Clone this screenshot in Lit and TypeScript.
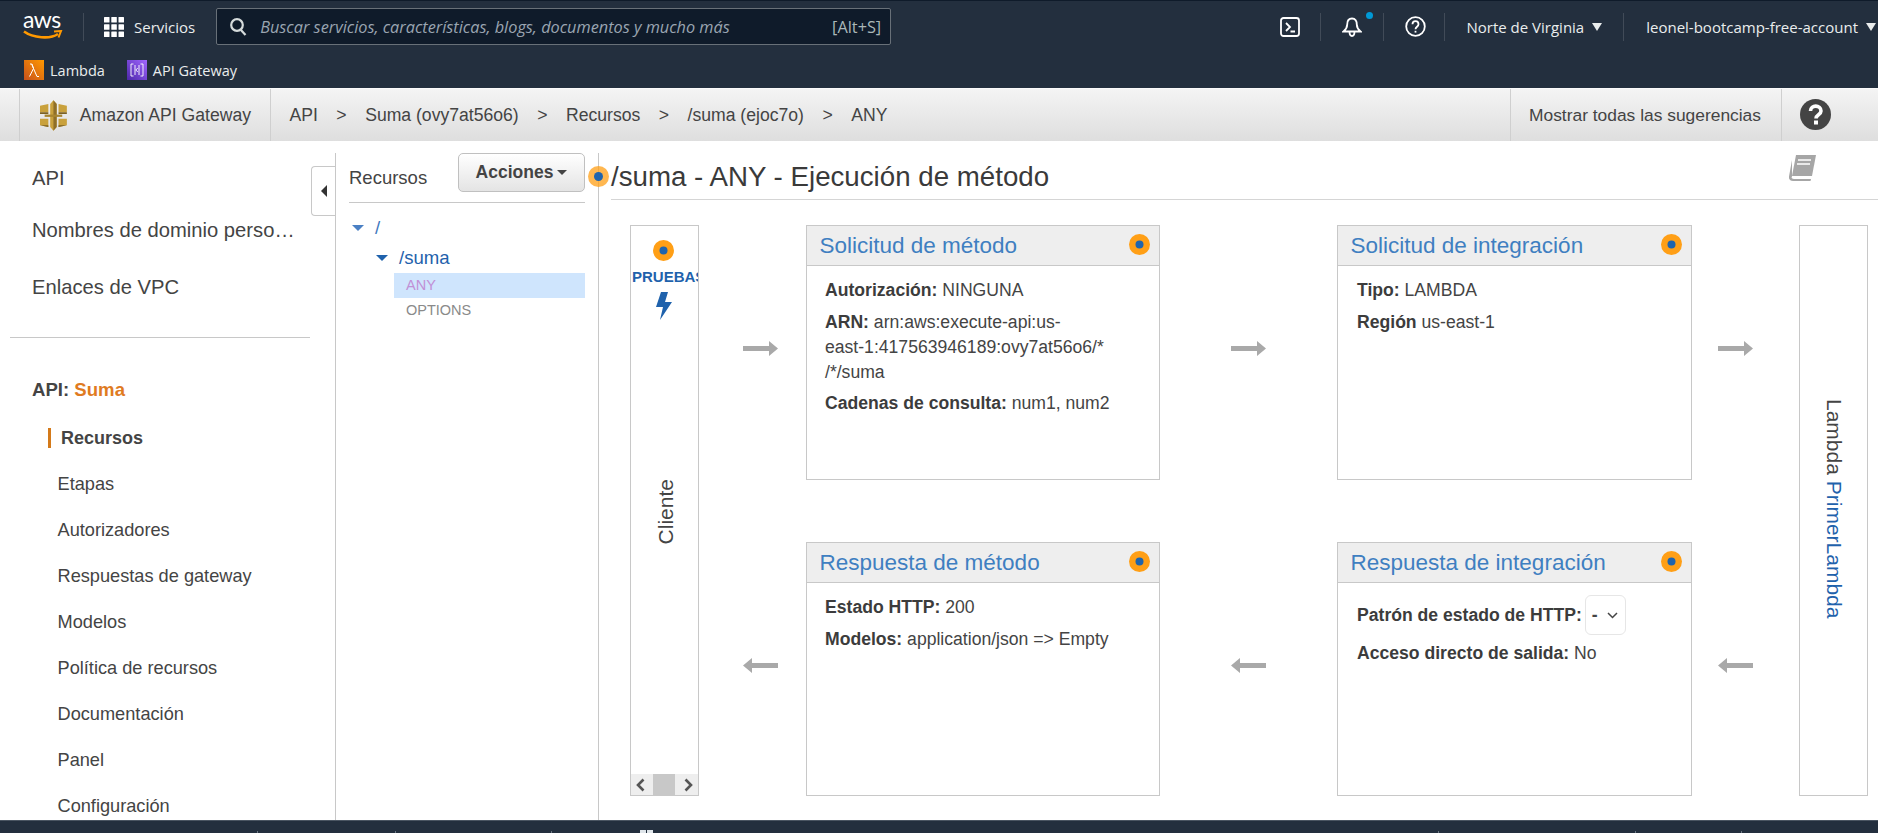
import { LitElement, html, css, svg } from 'lit';
import { customElement } from 'lit/decorators.js';

const SUB_NAV = ['Etapas', 'Autorizadores', 'Respuestas de gateway', 'Modelos', 'Política de recursos', 'Documentación', 'Panel', 'Configuración'];
const FOOT_TICKS = [257, 395, 551, 1438, 1635, 1741];

const dot = svg`<svg class="dot" width="21" height="21" viewBox="0 0 21 21"><circle cx="10.5" cy="10.5" r="10.5" fill="#ff9f16"/><circle cx="10.5" cy="10.5" r="4" fill="#1f64ad"/></svg>`;

const arrowRight = svg`<svg width="35" height="15" viewBox="0 0 35 15"><path d="M0 5h26V0l9 7.5-9 7.500V10H0z" fill="#a9a9a9"/></svg>`;
const arrowLeft = svg`<svg width="35" height="15" viewBox="0 0 35 15"><path d="M35 5H9V0L0 7.500l9 7.500V10h26z" fill="#a9a9a9"/></svg>`;

@customElement('app-root')
export class AppRoot extends LitElement {
  static styles = css`
    :host {
      display: flex;
      flex-direction: column;
      width: 1878px;
      height: 833px;
      overflow: hidden;
      background: #fff;
      font-family: 'Liberation Sans', Arial, sans-serif;
      color: #444;
    }

    /* top console nav */
    .nav {
      flex: 0 0 88px;
      background: #232f3e;
      border-top: 1px solid #0f1b2a;
      box-sizing: border-box;
      color: #eaeded;
      font-family: 'Open Sans', sans-serif;
    }
    .nav-main {
      display: flex;
      align-items: center;
      height: 51px;
    }
    .aws {
      position: relative;
      width: 40px;
      height: 30px;
      margin-left: 23px;
      margin-top: -2px;
    }
    .aws span {
      display: block;
      font: 23px/20px Lato, sans-serif;
      letter-spacing: -0.5px;
      color: #fff;
      margin-top: -2px;
    }
    .aws svg { display: block; margin-top: 1px; }
    .sep {
      width: 1px;
      height: 28px;
      background: #414b58;
      flex: none;
    }
    .services { display: flex; align-items: center; margin-left: 20px; font-size: 15px; gap: 10px; }
    .services svg { display: block; }
    .search {
      display: flex;
      align-items: center;
      width: 675px;
      height: 37px;
      margin-left: 21px;
      padding: 0 9px 0 13px;
      box-sizing: border-box;
      background: #0f1b2a;
      border: 1px solid #687078;
      border-radius: 2px;
      color: #95a5a6;
      font-size: 16.3px;
    }
    .search svg { margin-right: 13px; flex: none; }
    .search i { flex: 1; color: #9aa5b1; white-space: nowrap; }
    .search b { font-weight: 400; color: #aab7b8; }
    .nav-right {
      display: flex;
      align-items: center;
      margin-left: auto;
      font-size: 15px;
      white-space: nowrap;
    }
    .nav-right svg { display: block; flex: none; }
    .bell { position: relative; margin: 0 21px; }
    .bell::after {
      content: '';
      position: absolute;
      top: -5px;
      right: -11px;
      width: 7px;
      height: 7px;
      border-radius: 50%;
      background: #0099d6;
    }
    .caret {
      width: 0;
      height: 0;
      border-left: 5px solid transparent;
      border-right: 5px solid transparent;
      border-top: 8px solid #eaeded;
      margin-left: 8px;
    }
    .nav-fav {
      display: flex;
      align-items: center;
      height: 36px;
      padding-left: 24px;
      font-size: 14.5px;
    }
    .nav-fav svg { display: block; margin-right: 6px; }
    .nav-fav span { margin-right: 22px; }

    /* breadcrumb bar */
    .crumbs {
      flex: 0 0 53px;
      display: flex;
      align-items: stretch;
      box-sizing: border-box;
      padding-left: 19px;
      background: linear-gradient(#f4f4f4, #dedede);
      border-top: 1px solid #fafafa;
      font-size: 17.6px;
      color: #444;
      white-space: nowrap;
    }
    .crumb-home {
      display: flex;
      align-items: center;
      border-left: 1px solid #cfcfcf;
      border-right: 1px solid #cfcfcf;
      padding: 0 19px 0 20px;
      gap: 13px;
      width: 252px;
      box-sizing: border-box;
    }
    .crumb-path { display: flex; align-items: center; padding-left: 18.5px; }
    .crumb-path em { font-style: normal; margin: 0 18.5px; }
    .tips {
      display: flex;
      align-items: center;
      margin-left: auto;
      width: 272px;
      box-sizing: border-box;
      padding-left: 18px;
      border-left: 1px solid #cfcfcf;
      border-right: 1px solid #cfcfcf;
      margin-right: 96px;
      position: relative;
      font-size: 17.4px;
    }
    .help { position: absolute; left: 289px; top: 10px; }

    /* main area */
    .body { flex: 1; display: flex; min-height: 0; position: relative; }
    .side {
      flex: 0 0 335px;
      box-sizing: border-box;
      overflow: hidden;
      padding-top: 22px;
    }
    .top-link {
      margin-left: 32px;
      width: 263px;
      font-size: 20.2px;
      line-height: 30px;
      white-space: nowrap;
      overflow: hidden;
      text-overflow: ellipsis;
    }
    .top-link + .top-link { margin-top: 22px; }
    .top-link.last { margin-top: 27px; }
    .side hr {
      margin: 35px 25px 0 10px;
      border: 0;
      border-top: 1px solid #c8c8c8;
    }
    .api-name {
      margin: 40px 0 0 32px;
      font-size: 18.6px;
      line-height: 24px;
      font-weight: 700;
    }
    .api-name span { color: #e07b1f; }
    .current {
      margin: 26px 0 0 48px;
      padding-left: 10px;
      height: 20px;
      line-height: 20px;
      border-left: 3px solid #d47a1a;
      font-size: 18px;
      font-weight: 700;
    }
    .sub { margin: 13px 0 0 57.5px; }
    .sub div { height: 46px; line-height: 46px; font-size: 18.2px; white-space: nowrap; }

    .tree {
      flex: 0 0 264px;
      box-sizing: border-box;
      margin-top: 12px;
      border-left: 1px solid #c8c8c8;
      border-right: 1px solid #c8c8c8;
      padding: 0 13px;
      position: relative;
    }
    .tab {
      position: absolute;
      left: -25px;
      top: 13px;
      width: 24px;
      height: 50px;
      box-sizing: border-box;
      background: #fff;
      border: 1px solid #c8c8c8;
      border-right: 0;
      border-radius: 4px 0 0 4px;
      display: flex;
      align-items: center;
      justify-content: center;
    }
    .tab::after {
      content: '';
      border-top: 6px solid transparent;
      border-bottom: 6px solid transparent;
      border-right: 6px solid #333;
      margin-left: 1px;
    }
    .tree-head {
      display: flex;
      align-items: flex-start;
      justify-content: space-between;
      height: 49px;
      border-bottom: 1px solid #c8c8c8;
    }
    .tree-head span { font-size: 18.5px; line-height: 49px; }
    .actions {
      display: flex;
      align-items: center;
      justify-content: center;
      gap: 4px;
      width: 127px;
      height: 39px;
      box-sizing: border-box;
      border: 1px solid #c0c0c0;
      border-radius: 5px;
      background: linear-gradient(#fff, #e4e4e4);
      font-size: 17.5px;
      font-weight: 700;
      color: #444;
    }
    .actions::after {
      content: '';
      border-left: 5px solid transparent;
      border-right: 5px solid transparent;
      border-top: 5px solid #444;
    }
    .node {
      display: flex;
      align-items: center;
      font-size: 18.6px;
      color: #1f62ac;
      height: 30px;
    }
    .node::before {
      content: '';
      border-left: 6px solid transparent;
      border-right: 6px solid transparent;
      border-top: 6px solid #1f62ac;
      margin-right: 11px;
    }
    .node.root { margin: 10px 0 0 3px; color: #3f78bd; }
    .node.root::before { border-top-color: #4a80c4; }
    .node.child { margin-left: 27px; }
    .method {
      margin-left: 45px;
      height: 25px;
      line-height: 25px;
      padding-left: 12px;
      font-size: 14.500px;
      color: #8a8a8a;
    }
    .method.on { background: #cfe5fd; color: #c190d6; }

    .main { flex: 1; min-width: 0; padding: 12px 0 0 12px; position: relative; }
    .title-dot { position: absolute; left: -11px; top: 25px; }
    .halo { width: 21px; height: 21px; border-radius: 50%; background: rgba(255, 159, 22, .75); display: flex; align-items: center; justify-content: center; }
    .halo i { width: 9px; height: 9px; border-radius: 50%; background: #1f64ad; }
    .title {
      position: relative;
      height: 46px;
      border-bottom: 1px solid #d5d5d5;
      font-size: 27.7px;
      line-height: 48px;
      color: #3a3a3a;
      white-space: nowrap;
    }
    .book { position: absolute; right: 61px; top: 2px; }

    .diagram {
      display: grid;
      grid-template-columns: 69px 107px 354px 177px 355px 107px 69px;
      grid-template-rows: 255px 62px 254px;
      margin: 25px 0 0 19px;
    }
    .client, .lambda {
      grid-row: 1 / 4;
      border: 1px solid #c8c8c8;
      box-sizing: border-box;
      overflow: hidden;
      position: relative;
    }
    .client { grid-column: 1; display: flex; flex-direction: column; align-items: center; }
    .client .dot { margin: 14px 2px 0 0; }
    .client b { font-size: 15px; line-height: 18px; color: #1f62ac; white-space: nowrap; margin: 7px 0 0 1px; align-self: flex-start; }
    .client .bolt { margin: 6px 1px 0 0; display: block; flex: none; }
    .client-label {
      flex: 1;
      display: flex;
      align-items: center;
      justify-content: center;
      padding: 0 0 70px 3px;
      font-size: 21px;
      color: #444;
    }
    .client-label span { writing-mode: vertical-rl; transform: rotate(180deg); }
    .bar { display: flex; width: 100%; height: 21px; background: #eee; justify-content: space-between; align-items: center; }
    .bar i { width: 22px; height: 21px; background: #c8c8c8; margin-right: 2px; }
    .bar svg { display: block; margin: 0 5px; }
    .lambda {
      grid-column: 7;
      display: flex;
      justify-content: center;
      padding-top: 173px;
      font-size: 21px;
      color: #444;
    }
    .lambda span { writing-mode: vertical-rl; white-space: nowrap; height: max-content; }
    .lambda a { color: #1f62ac; }

    .card {
      border: 1px solid #c8c8c8;
      box-sizing: border-box;
      font-size: 17.6px;
      line-height: 25px;
      color: #444;
    }
    .card header {
      display: flex;
      align-items: center;
      justify-content: space-between;
      height: 40px;
      box-sizing: border-box;
      padding: 0.5px 9px 0 12.5px;
      background: #eee;
      border-bottom: 1px solid #c8c8c8;
      font-size: 22.5px;
      color: #3f7fc1;
    }
    .card header .dot { margin-top: -3px; }
    .card section { padding: 12px 19px; }
    .card.c2 section { padding-left: 18px; }
    .card p { margin: 0 0 6.5px; }
    .card b { color: #3c3c3c; }
    .select-row { display: flex; align-items: center; height: 40px; }
    .select {
      display: flex;
      align-items: center;
      justify-content: space-between;
      box-sizing: border-box;
      width: 41px;
      height: 40px;
      margin-left: 3px;
      padding: 0 7px 0 6px;
      border: 1px solid #e6e6e6;
      border-radius: 6px;
      font-weight: 700;
    }
    .arrow { align-self: start; justify-self: start; margin-top: 116px; }
    .a1 { margin-left: 44px; }
    .a2 { margin-left: 71px; }
    .a3 { margin-left: 26px; }
    .arrow svg { display: block; }
    .r1 { grid-row: 1; }
    .r2 { grid-row: 3; }
    .c1 { grid-column: 2; }
    .c2 { grid-column: 3; }
    .c3 { grid-column: 4; }
    .c4 { grid-column: 5; }
    .c5 { grid-column: 6; }

    .foot {
      flex: 0 0 13px;
      box-sizing: border-box;
      position: relative;
      background: #232f3e;
      border-top: 1px solid #4a5562;
    }
    .tick { position: absolute; bottom: 0; width: 1px; height: 2px; background: #6b7683; }
    .foot-icon { position: absolute; left: 640px; bottom: 0; display: flex; gap: 1px; }
    .foot-icon i { width: 6px; height: 3px; background: #dfe5ea; }
  `;

  render() {
    return html`
      <div class="nav">
        <div class="nav-main">
          <div class="aws">
            <span>aws</span>
            <svg width="40" height="11" viewBox="0 0 40 11"><path d="M1 1.500C10 8 27 9.500 35 4" fill="none" stroke="#f90" stroke-width="2.600"/><path d="M31 1.500l7-.5-2.500 6.500" fill="none" stroke="#f90" stroke-width="2"/></svg>
          </div>
          <div class="sep" style="margin-left:20px"></div>
          <div class="services">
            <svg width="20" height="20" viewBox="0 0 20 20" fill="#fff"><rect width="5.500" height="5.500" rx=".5"/><rect x="7.300" width="5.500" height="5.500" rx=".5"/><rect x="14.500" width="5.500" height="5.500" rx=".5"/><rect y="7.300" width="5.500" height="5.500" rx=".5"/><rect x="7.300" y="7.300" width="5.500" height="5.500" rx=".5"/><rect x="14.500" y="7.300" width="5.500" height="5.500" rx=".5"/><rect y="14.500" width="5.500" height="5.500" rx=".5"/><rect x="7.300" y="14.500" width="5.500" height="5.500" rx=".5"/><rect x="14.500" y="14.500" width="5.500" height="5.500" rx=".5"/></svg>
            <span>Servicios</span>
          </div>
          <div class="search">
            <svg width="17" height="18" viewBox="0 0 17 18" fill="none" stroke="#d5dbdb" stroke-width="2.200"><circle cx="7" cy="7" r="5.800"/><path d="M10.500 11.500L15.500 17"/></svg>
            <i>Buscar servicios, características, blogs, documentos y mucho más</i>
            <b>[Alt+S]</b>
          </div>
          <div class="nav-right">
            <svg width="20" height="20" viewBox="0 0 20 20" fill="none" stroke="#fff" stroke-width="1.800"><rect x="1" y="1" width="18" height="18" rx="2.500"/><path d="M6 6l4 4-4 4M10.500 14.500H15"/></svg>
            <div class="sep" style="margin-left:20px"></div>
            <div class="bell">
              <svg width="20" height="20" viewBox="0 0 20 20" fill="none" stroke="#fff" stroke-width="1.800"><path d="M10 1.500c-3.500 0-4.800 3-4.800 6 0 3-1.400 5-3.700 7h17c-2.300-2-3.700-4-3.700-7 0-3-1.300-6-4.800-6zM7.500 14.500c0 6 5 6 5 0"/></svg>
            </div>
            <div class="sep"></div>
            <svg style="margin:0 18px 0 21px" width="21" height="21" viewBox="0 0 21 21" fill="none" stroke="#fff" stroke-width="1.800"><circle cx="10.500" cy="10.500" r="9.300"/><path d="M7.500 8.200c0-4 6-4 6 0 0 2.500-3 2.500-3 5"/><path d="M10.500 14.800v1.800"/></svg>
            <div class="sep"></div>
            <span style="margin-left:21px">Norte de Virginia</span><i class="caret"></i>
            <div class="sep" style="margin:0 22px 0 21px"></div>
            <span>leonel-bootcamp-free-account</span><i class="caret" style="margin-right:2px"></i>
          </div>
        </div>
        <div class="nav-fav">
          <svg width="20" height="20" viewBox="0 0 20 20"><defs><linearGradient id="lg" x1="0" y1="1" x2="1" y2="0"><stop offset="0" stop-color="#c8511b"/><stop offset="1" stop-color="#f90"/></linearGradient></defs><rect width="20" height="20" fill="url(#lg)"/><path d="M5.500 16.500L9.500 8.500 7.800 4H6M9.500 8.500l3.500 8h2M9.500 8.500L7.800 4" fill="none" stroke="#fff" stroke-width="1"/></svg>
          <span>Lambda</span>
          <svg width="20" height="20" viewBox="0 0 20 20"><defs><linearGradient id="pg" x1="0" y1="1" x2="1" y2="0"><stop offset="0" stop-color="#4d27aa"/><stop offset="1" stop-color="#a166ff"/></linearGradient></defs><rect width="20" height="20" fill="url(#pg)"/><path d="M6.500 4H4v12h2.500M13.500 4H16v12h-2.500M8 5v10M12 5v10M10.800 8l-2 2 2 2" fill="none" stroke="#fff" stroke-width=".9"/></svg>
          <span>API Gateway</span>
        </div>
      </div>

      <div class="crumbs">
        <div class="crumb-home">
          <svg width="29" height="33" viewBox="0 0 29 33">
            <path d="M11 4l3.500-4L18 4v25l-3.500 4-3.500-4z" fill="#c9a13c"/>
            <path d="M14.500 0L18 4v25l-3.500 4z" fill="#8f6f28"/>
            <path d="M0 6l9-2v9H0zM29 6l-9-2v9h9zM0 20h9v9l-9-2zM29 20h-9v9l9-2z" fill="#c9a13c"/>
            <path d="M0 13h9v2H0zM20 13h9v2h-9zM0 27l9 2v-2zM20 29l9-2h-9z" fill="#7d6223"/>
            <path d="M5 15.500h19v2.500H5z" fill="#a8852f"/>
          </svg>
          <span>Amazon API Gateway</span>
        </div>
        <div class="crumb-path">
          <span>API</span><em>&gt;</em><span>Suma (ovy7at56o6)</span><em>&gt;</em><span>Recursos</span><em>&gt;</em><span>/suma (ejoc7o)</span><em>&gt;</em><span>ANY</span>
        </div>
        <div class="tips">
          <span>Mostrar todas las sugerencias</span>
          <svg class="help" width="31" height="31" viewBox="0 0 31 31"><circle cx="15.500" cy="15.500" r="15.500" fill="#444"/><path d="M10.500 12c0-6.500 10.500-6.500 10.500 0 0 4-5 3.500-5 7.500" fill="none" stroke="#fff" stroke-width="3.600"/><rect x="14" y="21.500" width="4" height="4" fill="#fff"/></svg>
        </div>
      </div>

      <div class="body">
        <nav class="side">
          <div class="top-link">API</div>
          <div class="top-link">Nombres de dominio personalizados</div>
          <div class="top-link last">Enlaces de VPC</div>
          <hr />
          <div class="api-name">API: <span>Suma</span></div>
          <div class="current">Recursos</div>
          <div class="sub">${SUB_NAV.map((item) => html`<div>${item}</div>`)}</div>
        </nav>

        <div class="tree">
          <div class="tab"></div>
          <div class="tree-head">
            <span>Recursos</span>
            <div class="actions">Acciones</div>
          </div>
          <div class="node root">/</div>
          <div class="node child">/suma</div>
          <div class="method on">ANY</div>
          <div class="method">OPTIONS</div>
        </div>

        <div class="main">
          <div class="title-dot halo"><i></i></div>
          <div class="title">
            /suma - ANY - Ejecución de método
            <svg class="book" width="28" height="26" viewBox="0 0 28 26"><path d="M7 0h20l-4 21H3z" fill="#a6a6a6"/><path d="M3 21.500C2 23 3 24 5 24h17l-.5 2H4c-3 0-4.500-2-4-4.500L3 5z" fill="#a6a6a6"/><path d="M9 5h13M8 9h13" stroke="#fff" stroke-width="1.600"/></svg>
          </div>

          <div class="diagram">
            <div class="client">
              ${dot}
              <b>PRUEBAS</b>
              <svg class="bolt" width="16" height="28" viewBox="0 0 16 28"><path d="M5 0h7L9 10h7L4 28l3-13H0z" fill="#1f62ac"/></svg>
              <div class="client-label"><span>Cliente</span></div>
              <div class="bar">
                <svg width="9" height="14" viewBox="0 0 9 14"><path d="M7.500 1.500L2 7l5.500 5.500" fill="none" stroke="#555" stroke-width="2.600"/></svg>
                <i></i>
                <svg width="9" height="14" viewBox="0 0 9 14"><path d="M1.500 1.500L7 7l-5.500 5.500" fill="none" stroke="#555" stroke-width="2.600"/></svg>
              </div>
            </div>

            <div class="arrow a1 r1 c1">${arrowRight}</div>
            <div class="card r1 c2">
              <header><span>Solicitud de método</span>${dot}</header>
              <section>
                <p><b>Autorización:</b> NINGUNA</p>
                <p><b>ARN:</b> arn:aws:execute-api:us-<br />east-1:417563946189:ovy7at56o6/*<br />/*/suma</p>
                <p><b>Cadenas de consulta:</b> num1, num2</p>
              </section>
            </div>
            <div class="arrow a2 r1 c3">${arrowRight}</div>
            <div class="card r1 c4">
              <header><span>Solicitud de integración</span>${dot}</header>
              <section>
                <p><b>Tipo:</b> LAMBDA</p>
                <p><b>Región</b> us-east-1</p>
              </section>
            </div>
            <div class="arrow a3 r1 c5">${arrowRight}</div>

            <div class="arrow a1 r2 c1">${arrowLeft}</div>
            <div class="card r2 c2">
              <header><span>Respuesta de método</span>${dot}</header>
              <section>
                <p><b>Estado HTTP:</b> 200</p>
                <p><b>Modelos:</b> application/json =&gt; Empty</p>
              </section>
            </div>
            <div class="arrow a2 r2 c3">${arrowLeft}</div>
            <div class="card r2 c4">
              <header><span>Respuesta de integración</span>${dot}</header>
              <section>
                <div class="select-row">
                  <b>Patrón de estado de HTTP:</b>
                  <div class="select">-<svg width="11" height="7" viewBox="0 0 11 7"><path d="M1 1l4.500 4.500L10 1" fill="none" stroke="#444" stroke-width="1.500"/></svg></div>
                </div>
                <p style="margin-top:6px"><b>Acceso directo de salida:</b> No</p>
              </section>
            </div>
            <div class="arrow a3 r2 c5">${arrowLeft}</div>

            <div class="lambda"><span>Lambda <a>PrimerLambda</a></span></div>
          </div>
        </div>
      </div>

      <div class="foot">
        ${FOOT_TICKS.map((x) => html`<i class="tick" style="left:${x}px"></i>`)}
        <div class="foot-icon"><i></i><i></i></div>
      </div>
    `;
  }
}
